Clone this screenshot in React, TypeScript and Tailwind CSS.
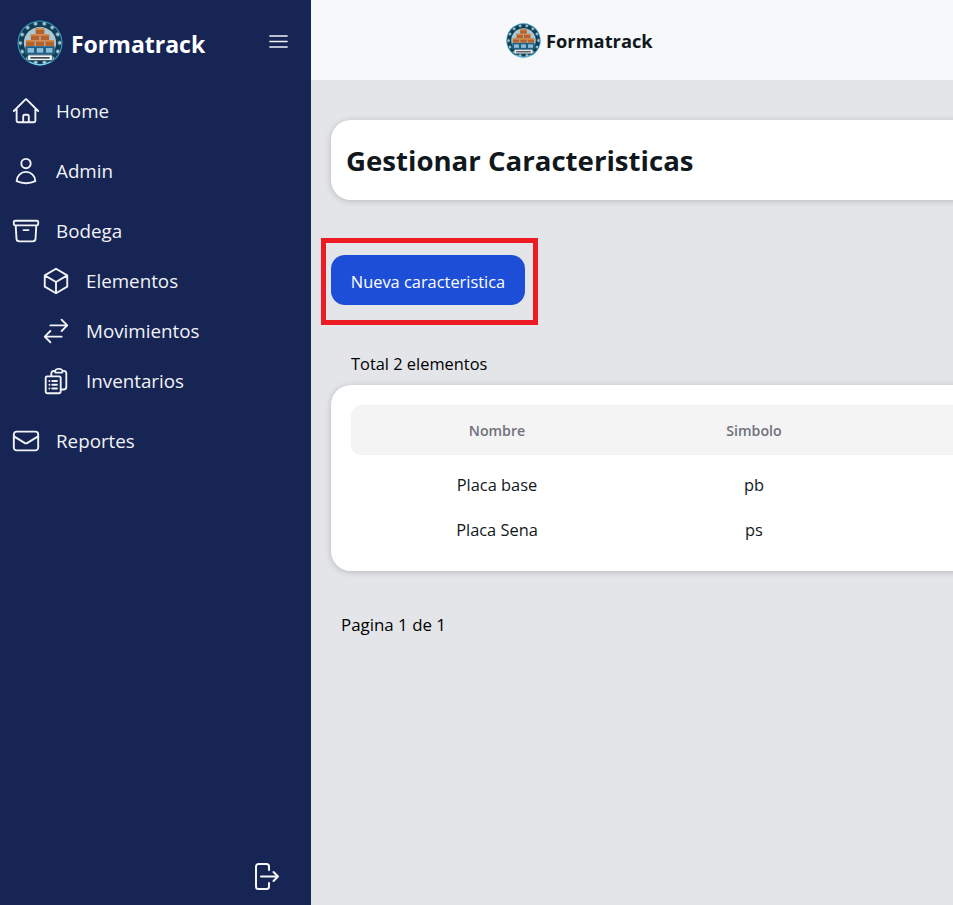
import { HiOutlineHome, HiOutlineUser, HiOutlineArchiveBox, HiOutlineCube, HiOutlineArrowsRightLeft, HiOutlineClipboardDocumentList, HiOutlineEnvelope, HiOutlineBars3 } from "react-icons/hi2";
import type { ComponentType, ReactNode } from "react";

function Logo({ size }: { size: number }) {
  const dots = Array.from({ length: 14 }, (_, i) => {
    const a = (i / 14) * Math.PI * 2 - Math.PI / 2 + 0.22;
    return { x: 50 + 43 * Math.cos(a), y: 50 + 43 * Math.sin(a) };
  });
  const boxes = [[50, 24], [39.500, 37], [60.500, 37], [29, 50], [50, 50], [71, 50]];
  return (
    <svg width={size} height={size} viewBox="0 0 100 100" className="shrink-0 blur-[0.4px]">
      <circle cx="50" cy="50" r="49" fill="#2d9cc4" />
      <circle cx="50" cy="50" r="46.500" fill="#143d52" />
      {dots.map((d, i) => (
        <circle key={i} cx={d.x} cy={d.y} r="4.500" fill="#9cc4d6" stroke="#2a5c74" strokeWidth="1.500" />
      ))}
      <circle cx="50" cy="50" r="35" fill="#a9c8d8" />
      <rect x="18" y="57" width="64" height="18" fill="#1f5f86" />
      <rect x="23" y="61" width="14" height="10" fill="#8dbcd4" />
      <rect x="43" y="61" width="14" height="10" fill="#8dbcd4" />
      <rect x="63" y="61" width="14" height="10" fill="#8dbcd4" />
      {boxes.map(([x, y], i) => (
        <g key={i}>
          <rect x={x - 9.500} y={y - 6.500} width="19" height="13" rx="1.500" fill="#b5622a" />
          <rect x={x - 9.500} y={y - 6.500} width="19" height="4" rx="1.500" fill="#d68a4e" />
        </g>
      ))}
      <rect x="23" y="76" width="54" height="12" rx="2" fill="#f4f6f6" stroke="#17384a" strokeWidth="1.500" />
      <rect x="29" y="80.500" width="42" height="3.500" fill="#3b4348" />
      <path d="M27 91 A46 46 0 0 0 73 91" fill="none" stroke="#7fd0ea" strokeWidth="2.500" />
    </svg>
  );
}

function NavItem({ icon: Icon, children, sub }: { icon: ComponentType<{ className?: string }>; children: ReactNode; sub?: boolean }) {
  return (
    <div className={`flex items-center ${sub ? "h-[50px] pl-[41px] gap-[15px]" : "h-[60px] pl-[11px] gap-[15px]"}`}>
      <Icon className="w-[30px] h-[30px] shrink-0 text-[#f1f3f8]" />
      <span className="text-[18.800px] text-[#f1f3f8]">{children}</span>
    </div>
  );
}

export default function App() {
  return (
    <div className="flex h-screen w-full overflow-hidden bg-[#e4e5e9] text-black font-['Open_Sans','Noto_Sans',sans-serif]">
      <aside className="w-[311px] shrink-0 h-full bg-[#172554] flex flex-col relative">
        <div className="h-[81px] pt-[19px] pl-[17px] pr-[20px] flex items-start justify-between">
          <div className="flex items-center gap-[8px]">
            <Logo size={46} />
            <span className="text-[23px] font-bold text-white leading-[46px] pt-[2px]">Formatrack</span>
          </div>
          <HiOutlineBars3 className="w-[25px] h-[25px] text-[#f1f3f8] mt-[10px]" />
        </div>
        <nav className="flex flex-col">
          <NavItem icon={HiOutlineHome}>Home</NavItem>
          <NavItem icon={HiOutlineUser}>Admin</NavItem>
          <NavItem icon={HiOutlineArchiveBox}>Bodega</NavItem>
          <div className="-mt-[5px] mb-[5px]">
            <NavItem sub icon={HiOutlineCube}>Elementos</NavItem>
            <NavItem sub icon={HiOutlineArrowsRightLeft}>Movimientos</NavItem>
            <NavItem sub icon={HiOutlineClipboardDocumentList}>Inventarios</NavItem>
          </div>
          <NavItem icon={HiOutlineEnvelope}>Reportes</NavItem>
        </nav>
        <div className="mt-auto flex justify-end pr-[31px] pb-[14px]">
          <svg width="27" height="29" viewBox="0 0 27 29" fill="none" stroke="#f5f6fa" strokeWidth="2" strokeLinecap="round" strokeLinejoin="round">
            <path d="M16 8V4.500A2.500 2.500 0 0 0 13.500 2h-8A2.500 2.500 0 0 0 3 4.500v20A2.500 2.500 0 0 0 5.500 27h8a2.500 2.500 0 0 0 2.500-2.500V21" />
            <path d="M8 14.500h17M20.500 10l4.500 4.500-4.500 4.500" />
          </svg>
        </div>
      </aside>

      <div className="flex-1 min-w-0 flex flex-col">
        <header className="h-[80px] shrink-0 bg-[#f7f8fa] flex items-center pl-[195px] gap-[5px]">
          <Logo size={35} />
          <span className="text-[18.300px] font-bold text-[#11181c] pt-[2px]">Formatrack</span>
        </header>
        <main className="flex-1 w-[1000px] pl-[20px] pt-[40px]">
          <div className="h-[80px] w-[900px] bg-white rounded-[20px] shadow-[0_1px_6px_rgba(0,0,0,0.2)] flex items-center pl-[15px]">
            <h1 className="text-[27.600px] font-bold text-[#11181c] pt-[2px]">Gestionar Caracteristicas</h1>
          </div>

          <div className="mt-[55px] relative w-[194px]">
            <button className="w-[194px] h-[50px] rounded-[14px] bg-[#1d4ed8] text-white text-[16.400px] pt-[4px]">Nueva caracteristica</button>
            <div className="absolute -left-[10px] -top-[17px] w-[217px] h-[87px] border-[5px] border-[#ed1c24]" />
          </div>

          <p className="mt-[47px] pl-[20px] text-[16.400px] leading-[24px]">Total 2 elementos</p>

          <div className="mt-[9px] w-[900px] h-[186px] bg-white rounded-[20px] shadow-[0_1px_6px_rgba(0,0,0,0.2)] p-[20px]">
            <table className="w-[860px] table-fixed border-collapse">
              <thead>
                <tr className="h-[50px] bg-[#f4f4f5] text-[14.200px] font-semibold text-[#71717a]">
                  <th className="w-[292px] font-semibold rounded-l-[10px] pt-[2px]">Nombre</th>
                  <th className="w-[222px] font-semibold pt-[2px]">Simbolo</th>
                  <th className="rounded-r-[10px]"></th>
                </tr>
              </thead>
              <tbody className="text-[16.400px] text-center text-[#11181c]">
                <tr className="h-[60px]">
                  <td>Placa base</td>
                  <td>pb</td>
                  <td></td>
                </tr>
                <tr className="h-[30px]">
                  <td>Placa Sena</td>
                  <td>ps</td>
                  <td></td>
                </tr>
              </tbody>
            </table>
          </div>

          <p className="mt-[42px] pl-[10px] text-[16.900px] leading-[24px]">Pagina 1 de 1</p>
        </main>
      </div>
    </div>
  );
}
